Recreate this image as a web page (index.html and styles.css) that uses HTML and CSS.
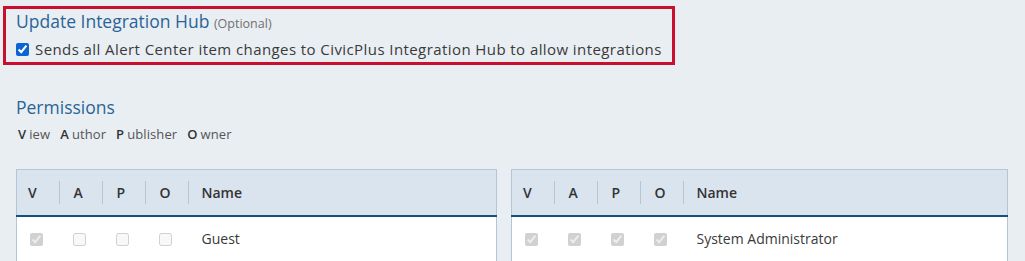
FILE: index.html
```html
<!DOCTYPE html>
<html lang="en">
<head>
<meta charset="utf-8">
<title>Integration Hub</title>
<link rel="stylesheet" href="styles.css">
</head>
<body>
<div class="page">
  <section class="hub">
    <div class="hub-title">Update Integration Hub <span class="optional">(Optional)</span></div>
    <label class="hub-check"><input type="checkbox" checked> Sends all Alert Center item changes to CivicPlus Integration Hub to allow integrations</label>
  </section>

  <h2 class="perm-title">Permissions</h2>
  <div class="legend">
    <span class="legend-item"><b>V</b>iew</span>
    <span class="legend-item"><b>A</b>uthor</span>
    <span class="legend-item"><b>P</b>ublisher</span>
    <span class="legend-item"><b>O</b>wner</span>
  </div>

  <div class="tables">
    <table class="perm-table">
      <thead>
        <tr><th class="c">V</th><th class="c">A</th><th class="c">P</th><th class="c">O</th><th class="name">Name</th></tr>
      </thead>
      <tbody>
        <tr>
          <td><input type="checkbox" checked disabled></td>
          <td><input type="checkbox" disabled></td>
          <td><input type="checkbox" disabled></td>
          <td><input type="checkbox" disabled></td>
          <td class="name">Guest</td>
        </tr>
      </tbody>
    </table>
    <table class="perm-table">
      <thead>
        <tr><th class="c">V</th><th class="c">A</th><th class="c">P</th><th class="c">O</th><th class="name">Name</th></tr>
      </thead>
      <tbody>
        <tr>
          <td><input type="checkbox" checked disabled></td>
          <td><input type="checkbox" checked disabled></td>
          <td><input type="checkbox" checked disabled></td>
          <td><input type="checkbox" checked disabled></td>
          <td class="name">System Administrator</td>
        </tr>
      </tbody>
    </table>
  </div>
</div>
</body>
</html>
```

FILE: styles.css
```css
html, body {
  margin: 0;
  padding: 0;
  background: #e9eef3;
  font-family: "Open Sans", Lato, sans-serif;
  color: #3a3a3a;
  height: 100%;
  overflow: hidden;
}

.page {
  padding: 6px 0 0 3px;
}

.hub {
  height: 53px;
  border: 3px solid #c8102e;
  padding: 0 0 0 10px;
  box-sizing: content-box;
  width: 656px;
}

.hub-title {
  font-size: 17.5px;
  line-height: 24px;
  color: #2a6496;
}

.optional {
  font-size: 12.5px;
  color: #707070;
}

.hub-check {
  display: flex;
  align-items: center;
  gap: 6px;
  font-size: 15px;
  line-height: 20px;
  letter-spacing: 0.42px;
  margin-top: 3px;
  color: #3a3a3a;
}

.hub-check input {
  margin: 0;
  width: 13px;
  height: 13px;
  accent-color: #0b63d6;
}

.perm-title {
  margin: 30px 0 0 13px;
  font-size: 17.5px;
  font-weight: normal;
  line-height: 24px;
  color: #2a6496;
}

.legend {
  display: flex;
  gap: 10px;
  margin: 6px 0 0 15px;
  font-size: 13px;
  line-height: 18px;
  letter-spacing: 0.1px;
  color: #555;
}

.legend b {
  color: #333;
  font-weight: 600;
  margin-right: 3px;
}

.tables {
  display: grid;
  grid-template-columns: 481px 497px;
  gap: 14px;
  margin: 26px 0 0 13px;
}

.perm-table {
  border-collapse: collapse;
  background: #fff;
  border: 1px solid #b6c5d6;
  width: 100%;
}

.perm-table thead th {
  background: #dae4ef linear-gradient(#b6c5d6, #b6c5d6) right center / 1px 23px no-repeat;
  height: 46px;
  padding: 0 0 0 14px;
  text-align: left;
  font-size: 14px;
  font-weight: 600;
  color: #333;
  border-bottom: 2px solid #17507f;
  box-sizing: border-box;
}

.perm-table thead th.c {
  width: 43px;
}

.perm-table thead th:first-child {
  padding-left: 11px;
}

.perm-table thead th.name {
  background: #dae4ef;
  padding-left: 13px;
}

.perm-table td {
  height: 44px;
  padding: 0 0 0 13px;
  font-size: 14px;
  color: #3a3a3a;
  vertical-align: middle;
}

.perm-table td input {
  margin: 1px 0 0;
  width: 13px;
  height: 13px;
  display: block;
}
```
